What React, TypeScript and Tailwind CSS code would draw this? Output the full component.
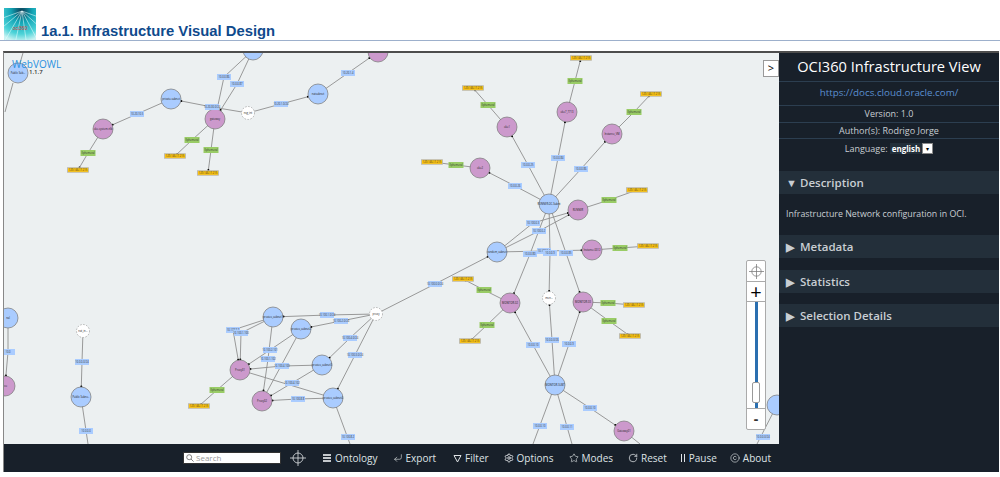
import { RotateCw, Settings, Star, Copyright, CornerDownLeft } from "lucide-react"

type Kind = "blue" | "purple" | "white"

const nodes: Record<string, { x: number; y: number; kind: Kind; text: string }> = {
  a1: { x: 18, y: 73, kind: "blue", text: "Public Sub..." },
  a2: { x: 171, y: 99, kind: "blue", text: "private-subnet" },
  a3: { x: 215, y: 119, kind: "purple", text: "gateway" },
  a4: { x: 103, y: 129, kind: "purple", text: "oke-system-nlb" },
  a5: { x: 248, y: 113, kind: "white", text: "nsg_int" },
  a6: { x: 318, y: 94, kind: "blue", text: "natsubnet" },
  a7: { x: 378, y: 52, kind: "purple", text: "" },
  a8: { x: 253, y: 50, kind: "blue", text: "" },
  c0: { x: 549, y: 204, kind: "blue", text: "RUNNER-OC-Subnt" },
  c1: { x: 507, y: 127, kind: "purple", text: "oke1" },
  c2: { x: 567, y: 112, kind: "purple", text: "oke7_7713" },
  c3: { x: 612, y: 134, kind: "purple", text: "Instance_VM" },
  c4: { x: 480, y: 168, kind: "purple", text: "oke2" },
  c5: { x: 578, y: 210, kind: "purple", text: "RUNNER" },
  c6: { x: 592, y: 250, kind: "purple", text: "Instance-0012" },
  b2: { x: 497, y: 252, kind: "blue", text: "random_subnet" },
  m1: { x: 510, y: 303, kind: "purple", text: "MONITOR-02" },
  m2: { x: 549, y: 298, kind: "white", text: "mon..." },
  m3: { x: 583, y: 302, kind: "purple", text: "MONITOR-03" },
  b3: { x: 555, y: 385, kind: "blue", text: "MONITOR-SUBT" },
  m4: { x: 624, y: 431, kind: "purple", text: "Gateway01" },
  w2: { x: 376, y: 314, kind: "white", text: "proxy" },
  l1: { x: 273, y: 317, kind: "blue", text: "proxies_subnet1" },
  l2: { x: 301, y: 329, kind: "blue", text: "proxies_subnet2" },
  l3: { x: 322, y: 365, kind: "blue", text: "proxies_subnet3" },
  l4: { x: 333, y: 398, kind: "blue", text: "proxies_subnet4" },
  l5: { x: 240, y: 370, kind: "purple", text: "Proxy01" },
  l6: { x: 262, y: 401, kind: "purple", text: "Proxy02" },
  s1: { x: 8, y: 318, kind: "blue", text: "nal" },
  s2: { x: 5, y: 386, kind: "purple", text: "nce" },
  s3: { x: 83, y: 331, kind: "white", text: "nat_in..." },
  s4: { x: 81, y: 397, kind: "blue", text: "Public Subne.." },
  s5: { x: 777, y: 405, kind: "blue", text: "" },
}

// from, through (x, y, text), to
const links: [string, [number, number, string], string][] = [
  ["a5", [212, 107, "10.20.30.0/24"], "a2"],
  ["a5", [281, 104, "10.20.1.0/24"], "a6"],
  ["a6", [348, 73, "10.20.1.4"], "a7"],
  ["a2", [137, 114, "10.20.10.5"], "a4"],
  ["a8", [224, 77, "10.0.0.86"], "a3"],
  ["a8", [237, 84, "10.0.0.87"], "a3"],
  ["c0", [528, 165, "10.0.0.25"], "c1"],
  ["c0", [558, 158, "10.0.0.84"], "c2"],
  ["c0", [581, 169, "10.0.0.86"], "c3"],
  ["c0", [515, 186, "10.0.0.26"], "c4"],
  ["b2", [533, 223, "10.100.0.3"], "c5"],
  ["b2", [539, 231, "10.100.0.2"], "c5"],
  ["b2", [544, 251, "10.100.0.4"], "c6"],
  ["c0", [530, 254, "10.0.0.80"], "m1"],
  ["c0", [566, 253, "10.0.0.85"], "m3"],
  ["c0", [550, 253, "10.0.0.9"], "m2"],
  ["w2", [435, 284, "10.100.0.0/24"], "b2"],
  ["b3", [533, 345, "10.0.0.10"], "m1"],
  ["b3", [552, 340, "10.0.0.0/26"], "m2"],
  ["b3", [569, 344, "10.0.0.9"], "m3"],
  ["b3", [590, 408, "10.0.0.10"], "m4"],
  ["w2", [327, 315, "10.100.1.0/24"], "l1"],
  ["w2", [341, 321, "10.100.2.0/24"], "l2"],
  ["w2", [350, 338, "10.100.4.0/24"], "l3"],
  ["w2", [355, 355, "10.100.3.0/24"], "l4"],
  ["l1", [233, 330, "10.177.7.7"], "l5"],
  ["l1", [241, 333, "10.100.1.100"], "l5"],
  ["l1", [268, 359, "10.100.1.102"], "l6"],
  ["l2", [270, 350, "10.100.2.101"], "l5"],
  ["l3", [282, 366, "10.100.4.100"], "l5"],
  ["l3", [292, 383, "10.100.4.102"], "l6"],
  ["l4", [298, 399, "10.100.8.8"], "l6"],
  ["s3", [82, 362, "10.0.0.0/24"], "s4"],
  ["s1", [8, 352, "10.0"], "s2"],
]

// purple node, green tag, yellow address
const publicIps: [string, number, number, number, number][] = [
  ["a3", 192, 140, 175, 156],
  ["a3", 211, 150, 208, 173],
  ["a4", 88, 153, 78, 170],
  ["c1", 488, 105, 473, 88],
  ["c2", 575, 81, 581, 58],
  ["c3", 634, 112, 651, 94],
  ["c4", 456, 165, 432, 162],
  ["c5", 609, 200, 637, 190],
  ["c6", 620, 248, 648, 246],
  ["m1", 484, 290, 463, 279],
  ["m1", 487, 325, 470, 341],
  ["m3", 608, 303, 634, 305],
  ["m3", 609, 321, 630, 336],
  ["l5", 217, 390, 199, 406],
]

// lines that run off the canvas
const strays: [number, number, number, number][] = [
  [23, 53, 20, 63],
  [13, 83, 5, 112],
  [555, 385, 533, 444],
  [555, 385, 572, 444],
  [624, 431, 640, 444],
  [333, 398, 350, 444],
  [81, 397, 88, 444],
  [777, 405, 757, 444],
  [301, 329, 262, 401],
  [333, 398, 240, 370],
]

const offCanvasTags: [number, number, string][] = [
  [348, 437, "10.100.8.2"],
  [86, 431, "10.0.0.0"],
  [540, 426, "10.0.0.10"],
  [567, 427, "10.0.0.11"],
  [763, 437, "10.0.0.0/24"],
]

const fills: Record<Kind, string> = { blue: "#aaccff", purple: "#cc99cc", white: "#ffffff" }

function shorten(x1: number, y1: number, x2: number, y2: number, by: number) {
  const d = Math.hypot(x2 - x1, y2 - y1) || 1
  return [x2 - ((x2 - x1) / d) * by, y2 - ((y2 - y1) / d) * by]
}

function Tag({ x, y, w, h, fill, text, stroke }: { x: number; y: number; w: number; h: number; fill: string; text: string; stroke?: string }) {
  return (
    <g>
      <rect x={x - w / 2} y={y - h / 2} width={w} height={h} fill={fill} stroke={stroke} strokeWidth={stroke ? 0.8 : 0} />
      <text x={x} y={y + 0.8} textAnchor="middle" fontSize="2.6" fill="#333" fontFamily="Open Sans, sans-serif">
        {text}
      </text>
    </g>
  )
}

function Graph() {
  const line = "#8f8f8f"
  return (
    <svg width="775" height="392" viewBox="4 52 775 392" className="block">
      {links.map(([from, via, to], i) => {
        const a = nodes[from]
        const b = nodes[to]
        const [ex, ey] = shorten(via[0], via[1], b.x, b.y, b.kind === "white" ? 7 : 10.5)
        return (
          <g key={i}>
            <polyline points={`${a.x},${a.y} ${via[0]},${via[1]} ${ex},${ey}`} fill="none" stroke={line} strokeWidth="0.9" />
            <circle cx={ex} cy={ey} r="1" fill="#000" />
          </g>
        )
      })}
      {publicIps.map(([from, gx, gy, yx, yy], i) => {
        const a = nodes[from]
        const [ex, ey] = shorten(gx, gy, yx, yy, 3)
        return (
          <g key={i}>
            <polyline points={`${a.x},${a.y} ${gx},${gy} ${ex},${ey}`} fill="none" stroke={line} strokeWidth="0.9" />
            <circle cx={ex} cy={ey} r="1" fill="#000" />
          </g>
        )
      })}
      {strays.map(([x1, y1, x2, y2], i) => (
        <line key={i} x1={x1} y1={y1} x2={x2} y2={y2} stroke={line} strokeWidth="0.9" />
      ))}
      {Object.entries(nodes).map(([id, n]) => (
        <g key={id}>
          <circle
            cx={n.x}
            cy={n.y}
            r={n.kind === "white" ? 6.5 : 10}
            fill={fills[n.kind]}
            stroke={n.kind === "white" ? "#999" : "#777"}
            strokeWidth="0.7"
            strokeDasharray={n.kind === "white" ? "1.5 1.5" : undefined}
          />
          <text x={n.x} y={n.y + 0.8} textAnchor="middle" fontSize="2.6" fill="#222" fontFamily="Open Sans, sans-serif">
            {n.text}
          </text>
        </g>
      ))}
      {links.map(([, via], i) => (
        <Tag key={i} x={via[0]} y={via[1]} w={14} h={6} fill="#aaccff" text={via[2]} />
      ))}
      {offCanvasTags.map(([x, y, text], i) => (
        <Tag key={i} x={x} y={y} w={14} h={6} fill="#aaccff" text={text} />
      ))}
      {publicIps.map(([, gx, gy, yx, yy], i) => (
        <g key={i}>
          <Tag x={gx} y={gy} w={15} h={6} fill="#99cc66" text="Ephemeral" />
          <Tag x={yx} y={yy} w={21} h={4.5} fill="#fcc20d" stroke="#b5b5b5" text="129.146.17.215" />
        </g>
      ))}
    </svg>
  )
}

function Logo() {
  const rays = [-70, -50, -30, -12, 8, 28, 48, 70]
  return (
    <svg width="32" height="32" viewBox="0 0 32 32" className="block shrink-0">
      <defs>
        <radialGradient id="logoGlow" cx="0.55" cy="0.1" r="0.95">
          <stop offset="0" stopColor="#0b3c55" />
          <stop offset="0.35" stopColor="#12a3b4" />
          <stop offset="0.75" stopColor="#4cd3d8" />
          <stop offset="1" stopColor="#c9f2f2" />
        </radialGradient>
      </defs>
      <rect width="32" height="32" fill="url(#logoGlow)" />
      {rays.map((a) => (
        <line
          key={a}
          x1="18"
          y1="3"
          x2={18 + Math.sin((a * Math.PI) / 180) * 42}
          y2={3 + Math.cos((a * Math.PI) / 180) * 42}
          stroke="#e8ffff"
          strokeOpacity="0.55"
          strokeWidth="1"
        />
      ))}
      <text x="16" y="22" textAnchor="middle" fontSize="5" fill="#d23b3b" fontFamily="Liberation Sans, sans-serif">
        oci360
      </text>
    </svg>
  )
}

function Target({ size, color }: { size: number; color: string }) {
  return (
    <svg width={size} height={size} viewBox="0 0 16 16" fill="none" stroke={color} strokeWidth="0.8" className="block">
      <circle cx="8" cy="8" r="5" />
      <path d="M8 0v16M0 8h16" />
    </svg>
  )
}

function ToolItem({ icon, label, className }: { icon: React.ReactNode; label: string; className: string }) {
  return (
    <div className={`flex items-center gap-[3px] ${className}`}>
      <span className="flex w-[10px] justify-center">{icon}</span>
      <span>{label}</span>
    </div>
  )
}

function Section({ title, open, className }: { title: string; open?: boolean; className?: string }) {
  return (
    <div className={`flex h-[23px] items-center gap-[5px] bg-[#232f3a] pl-[7px] text-[11.5px] font-semibold text-[#c9ced3] ${className ?? ""}`}>
      <span className="w-[9px] text-[11px] leading-none">{open ? "▼" : "▶"}</span>
      <span>{title}</span>
    </div>
  )
}

export default function App() {
  return (
    <div className="h-[477px] w-[1000px] overflow-hidden bg-white font-['Open_Sans',sans-serif]">
      {/* Page heading */}
      <div className="flex h-[41px] items-end gap-[5px] border-b border-[#9db0cc] pl-[4px] pt-[4px]">
        <Logo />
        <h1 className="font-['Liberation_Sans',sans-serif] text-[14.8px] font-bold leading-[18px] text-[#0f4a8c]">
          1a.1. Infrastructure Visual Design
        </h1>
      </div>

      <div className="ml-[3px] mr-[1px] mt-[10px] flex h-[421px] border-l border-t-2 border-l-[#888] border-t-[#4d4d4d]">
        {/* Graph + toolbar */}
        <div className="flex w-[775px] flex-col">
          <div className="relative h-[391px] overflow-hidden bg-[#ecf0f1]">
            <div className="-mt-px">
              <Graph />
            </div>
            <div className="absolute left-[8px] top-[5px] text-[10px] leading-[12px] text-[#2a90e0]">WebVOWL</div>
            <div className="absolute left-[25px] top-[15px] text-[6px] font-semibold leading-[8px] text-[#333]">1.1.7</div>
            <button className="absolute right-0 top-[7px] flex h-[17px] w-[16px] items-center justify-center border border-[#999] bg-white text-[11px] text-black">
              &gt;
            </button>

            {/* Zoom slider */}
            <div className="absolute left-[742px] top-[207px] flex h-[170px] w-[20px] flex-col rounded-[2px] border border-[#aaa] bg-white">
              <div className="flex h-[21px] items-center justify-center border-b border-[#aaa]">
                <Target size={15} color="#777" />
              </div>
              <div className="flex h-[20px] items-center justify-center border-b border-[#aaa] text-[20px] leading-none text-black">+</div>
              <div className="relative flex-1">
                <div className="absolute bottom-0 left-[8px] top-0 w-[3px] bg-[#2a6fb0]" />
                <div className="absolute left-[5px] top-[80px] h-[21px] w-[8px] rounded-[2px] border border-[#999] bg-white" />
              </div>
              <div className="flex h-[21px] items-center justify-center border-t border-[#aaa] text-[14px] font-bold leading-none text-[#333]">-</div>
            </div>
          </div>

          <div className="flex h-[28px] items-center justify-end bg-[#18202a] pr-[8px] text-[10px] font-medium text-[#dfe3e6]">
            <div className="mr-[9px] flex h-[12px] w-[98px] items-center gap-[2px] border border-[#333] bg-white pl-[2px] text-[8px] font-normal text-[#999]">
              <svg width="8" height="8" viewBox="0 0 8 8" fill="none" stroke="#666" strokeWidth="0.8">
                <circle cx="3.2" cy="3.2" r="2.5" />
                <path d="M5 5l2.6 2.6" />
              </svg>
              <span>Search</span>
            </div>
            <div className="mr-[16px]">
              <Target size={16} color="#dfe3e6" />
            </div>
            <ToolItem
              className="mr-[15px]"
              label="Ontology"
              icon={
                <span className="flex w-[8px] flex-col gap-[1px]">
                  <span className="h-[2px] bg-[#c4c8cc]" />
                  <span className="h-[2px] bg-[#c4c8cc]" />
                  <span className="h-[2px] bg-[#c4c8cc]" />
                </span>
              }
            />
            <ToolItem className="mr-[16px]" label="Export" icon={<CornerDownLeft size={10} strokeWidth={1.5} />} />
            <ToolItem
              className="mr-[15px]"
              label="Filter"
              icon={
                <svg width="9" height="9" viewBox="0 0 9 9" fill="none" stroke="currentColor" strokeWidth="1">
                  <path d="M1 1.5h7L4.5 8z" />
                </svg>
              }
            />
            <ToolItem className="mr-[15px]" label="Options" icon={<Settings size={10} strokeWidth={2.2} />} />
            <ToolItem className="mr-[15px]" label="Modes" icon={<Star size={10} strokeWidth={1.5} />} />
            <ToolItem className="mr-[14px]" label="Reset" icon={<RotateCw size={10} strokeWidth={1.8} />} />
            <div className="mr-[13px] flex items-center gap-[4px]">
              <span className="flex gap-[2px]">
                <span className="h-[8px] w-[1px] bg-[#dfe3e6]" />
                <span className="h-[8px] w-[1px] bg-[#dfe3e6]" />
              </span>
              <span>Pause</span>
            </div>
            <ToolItem label="About" icon={<Copyright size={10} strokeWidth={1.5} />} />
          </div>
        </div>

        {/* Sidebar */}
        <div className="w-[220px] bg-[#18202a] text-center">
          <div className="flex h-[29px] items-center justify-center border-b border-[#2c3e50] text-[14.6px] text-white">
            OCI360 Infrastructure View
          </div>
          <div className="flex h-[24px] items-center justify-center border-b border-[#2c3e50] text-[9.8px] text-[#5b8fd0]">
            https://docs.cloud.oracle.com/
          </div>
          <div className="flex h-[17px] items-center justify-center border-b border-[#2c3e50] text-[9px] text-[#c9ced3]">
            Version: 1.0
          </div>
          <div className="flex h-[16px] items-center justify-center border-b border-[#2c3e50] text-[9px] text-[#c9ced3]">
            Author(s): Rodrigo Jorge
          </div>
          <div className="flex h-[19px] items-center justify-center gap-[2px] text-[9px] text-[#c9ced3]">
            <span>Language:</span>
            <span className="flex items-center">
              <span className="bg-[#232f3a] px-[2px] text-[8px] font-bold leading-[11px] text-white">english</span>
              <span className="flex h-[11px] w-[11px] items-center justify-center border border-[#888] bg-white text-[6px] leading-none text-black">▾</span>
            </span>
          </div>
          <div className="text-left">
            <Section className="mt-[13px]" title="Description" open />
            <p className="h-[41px] pl-[7px] pt-[14px] text-[8.8px] leading-[12px] text-[#c9ced3]">
              Infrastructure Network configuration in OCI.
            </p>
            <Section title="Metadata" />
            <Section className="mt-[12px]" title="Statistics" />
            <Section className="mt-[11px]" title="Selection Details" />
          </div>
        </div>
      </div>
    </div>
  )
}
